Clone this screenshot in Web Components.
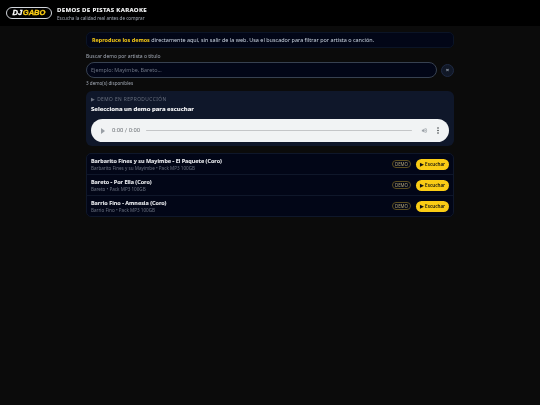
<!DOCTYPE html>
<html lang="es">
<head>
<meta charset="utf-8">
<title>Demos de pistas karaoke</title>
<style>
html, body { margin: 0; padding: 0; height: 100%; }
body { background: #0b0b0b; color: #e5e7eb; font-family: "Noto Sans", "Open Sans", sans-serif; filter: blur(.3px); }
</style>
</head>
<body>
<site-header></site-header>
<demo-page>
  <info-note><b>Reproduce los demos</b> directamente aquí, sin salir de la web. Usa el buscador para filtrar por artista o canción.</info-note>
  <demo-search></demo-search>
  <demo-player></demo-player>
  <demo-list>
    <demo-row title-text="Barbarito Fines y su Mayimbe - El Paquete (Coro)" sub="Barbarito Fines y su Mayimbe • Pack MP3 100GB"></demo-row>
    <demo-row title-text="Bareto - Por Ella (Coro)" sub="Bareto • Pack MP3 100GB"></demo-row>
    <demo-row title-text="Barrio Fino - Amnesia (Coro)" sub="Barrio Fino • Pack MP3 100GB"></demo-row>
  </demo-list>
</demo-page>

<script>
class SiteHeader extends HTMLElement {
    constructor() {
        super();
        this.attachShadow({mode: 'open'});
        this.shadowRoot.innerHTML = `
<style>
:host { display: flex; align-items: center; gap: 5px; height: 26px; padding: 0 6px; background: #000; box-sizing: border-box; }
.logo { box-sizing: border-box; width: 46px; height: 12px; border: 1px solid #d1d5db; border-radius: 6px; display: flex; align-items: center; justify-content: center; gap: .5px; font: italic 700 7.6px/1 "Liberation Sans", sans-serif; -webkit-text-stroke: .3px currentColor; margin-top: -1px; }
.logo i { color: #fff; }
.logo em { color: #facc15; }
h1 { margin: 1px 0 0; font: 700 6px/8px "Noto Sans", sans-serif; letter-spacing: .35px; color: #f9fafb; -webkit-text-stroke: .1px currentColor; }
p { margin: 1px 0 0; font: 400 4.6px/7px "Noto Sans", sans-serif; color: #a3aab6; }
</style>
<div class="logo"><i>DJ</i><em>GABO</em></div>
<div><h1>DEMOS DE PISTAS KARAOKE</h1><p>Escucha la calidad real antes de comprar</p></div>`;
    }
}

class DemoPage extends HTMLElement {
    constructor() {
        super();
        this.attachShadow({mode: 'open'});
        this.shadowRoot.innerHTML = `
<style>
:host { display: block; width: 368px; margin: 0 auto; padding-top: 6px; }
</style>
<slot></slot>`;
    }
}

class InfoNote extends HTMLElement {
    constructor() {
        super();
        this.attachShadow({mode: 'open'});
        this.shadowRoot.innerHTML = `
<style>
:host { display: block; box-sizing: border-box; height: 16px; padding: 0 5px; border-radius: 5px; background: #020617; border: 1px solid #0b1426; font: 400 5.46px/14px "Noto Sans", sans-serif; color: #cbd5e1; white-space: nowrap; }
::slotted(b) { color: #facc15; font-weight: 700; }
</style>
<slot></slot>`;
    }
}

class DemoSearch extends HTMLElement {
    constructor() {
        super();
        this.attachShadow({mode: 'open'});
        this.shadowRoot.innerHTML = `
<style>
:host { display: block; margin-top: 4px; }
label { display: block; font: 400 5px/8px "Noto Sans", sans-serif; color: #a3aab6; }
.row { display: flex; align-items: center; gap: 4px; margin-top: 2px; }
.field { flex: 1; box-sizing: border-box; height: 16px; border: 1px solid #374151; border-radius: 8px; background: #020617; padding: 0 4px; font: 400 5.4px/14px "Noto Sans", sans-serif; color: #6b7280; }
.clear { box-sizing: border-box; width: 13px; height: 13px; border-radius: 50%; border: 1px solid #1f2a44; background: #111827; color: #cbd5e1; font: 400 6px/11px "Noto Sans", sans-serif; text-align: center; }
small { display: block; margin-top: 2px; font: 400 4.6px/7px "Noto Sans", sans-serif; color: #a3aab6; }
</style>
<label>Buscar demo por artista o título</label>
<div class="row"><div class="field">Ejemplo: Mayimbe, Bareto...</div><div class="clear">×</div></div>
<small>3 demo(s) disponibles</small>`;
    }
}

class DemoPlayer extends HTMLElement {
    constructor() {
        super();
        this.attachShadow({mode: 'open'});
        this.shadowRoot.innerHTML = `
<style>
:host { display: block; box-sizing: border-box; height: 55px; margin-top: 4px; padding: 5px 5px; border-radius: 6px; background: #0f172a; }
.tag { font: 400 4.8px/7px "Noto Sans", sans-serif; letter-spacing: .45px; color: #6b7280; }
.name { margin-top: 2px; font: 700 6px/8px "Noto Sans", sans-serif; color: #f9fafb; -webkit-text-stroke: .1px currentColor; }
.audio { display: flex; align-items: center; height: 23px; margin-top: 6px; padding: 0 10px 0 10px; border-radius: 12px; background: #f1f3f4; color: #5f6368; }
.play { width: 0; height: 0; border-left: 4px solid #9aa0a6; border-top: 3px solid transparent; border-bottom: 3px solid transparent; }
.time { margin-left: 7px; font: 400 5.9px/1 "Roboto", sans-serif; color: #70757a; white-space: nowrap; }
.bar { flex: 1; height: 1.5px; margin: 0 9px 0 6px; background: #c4c6c8; border-radius: 1px; }
svg { display: block; }
.dots { margin-left: 9px; }
</style>
<div class="tag">▶ DEMO EN REPRODUCCIÓN</div>
<div class="name">Selecciona un demo para escuchar</div>
<div class="audio">
  <span class="play"></span>
  <span class="time">0:00 / 0:00</span>
  <span class="bar"></span>
  <svg width="7" height="7" viewBox="0 0 24 24" fill="#9aa0a6"><path d="M3 9v6h4l5 5V4L7 9H3zm13.5 3A4.5 4.5 0 0 0 14 8v8a4.5 4.5 0 0 0 2.5-4zM14 3.2v2.1a7 7 0 0 1 0 13.4v2.1a9 9 0 0 0 0-17.6z"/></svg>
  <svg class="dots" width="2" height="7" viewBox="0 0 2 7" fill="#3c4043"><circle cx="1" cy="1" r=".8"/><circle cx="1" cy="3.5" r=".8"/><circle cx="1" cy="6" r=".8"/></svg>
</div>`;
    }
}

class DemoList extends HTMLElement {
    constructor() {
        super();
        this.attachShadow({mode: 'open'});
        this.shadowRoot.innerHTML = `
<style>
:host { display: block; box-sizing: border-box; margin-top: 7px; border: 1px solid #0f172a; border-radius: 5px; background: #020617; }
</style>
<slot></slot>`;
    }
}

class DemoRow extends HTMLElement {
    constructor() {
        super();
        this.attachShadow({mode: 'open'});
        this.shadowRoot.innerHTML = `
<style>
:host { display: flex; align-items: center; justify-content: space-between; box-sizing: border-box; height: 21px; padding: 0 4px 0 4px; border-bottom: 1px solid #0f172a; }
:host(:last-child) { border-bottom: 0; height: 20px; }
.t { font: 700 5.45px/8px "Noto Sans", sans-serif; color: #e5e7eb; -webkit-text-stroke: .1px currentColor; }
.s { font: 400 4.6px/6px "Noto Sans", sans-serif; color: #6b7280; }
.acts { display: flex; align-items: center; gap: 5px; }
.badge { box-sizing: border-box; height: 8px; width: 19px; border: 1px solid #5b4d1f; border-radius: 4px; font: 400 4.4px/6px "Noto Sans", sans-serif; color: #b8a878; text-align: center; }
.btn { box-sizing: border-box; height: 11px; width: 33px; border-radius: 6px; background: #facc15; color: #111; font: 600 4.6px/11px "Noto Sans", sans-serif; text-align: center; white-space: nowrap; }
</style>
<div><div class="t"></div><div class="s"></div></div>
<div class="acts"><span class="badge">DEMO</span><span class="btn">▶ Escuchar</span></div>`;
    }

    connectedCallback() {
        this.shadowRoot.querySelector('.t').textContent = this.getAttribute('title-text');
        this.shadowRoot.querySelector('.s').textContent = this.getAttribute('sub');
    }
}

customElements.define('site-header', SiteHeader);
customElements.define('demo-page', DemoPage);
customElements.define('info-note', InfoNote);
customElements.define('demo-search', DemoSearch);
customElements.define('demo-player', DemoPlayer);
customElements.define('demo-list', DemoList);
customElements.define('demo-row', DemoRow);
</script>
</body>
</html>
